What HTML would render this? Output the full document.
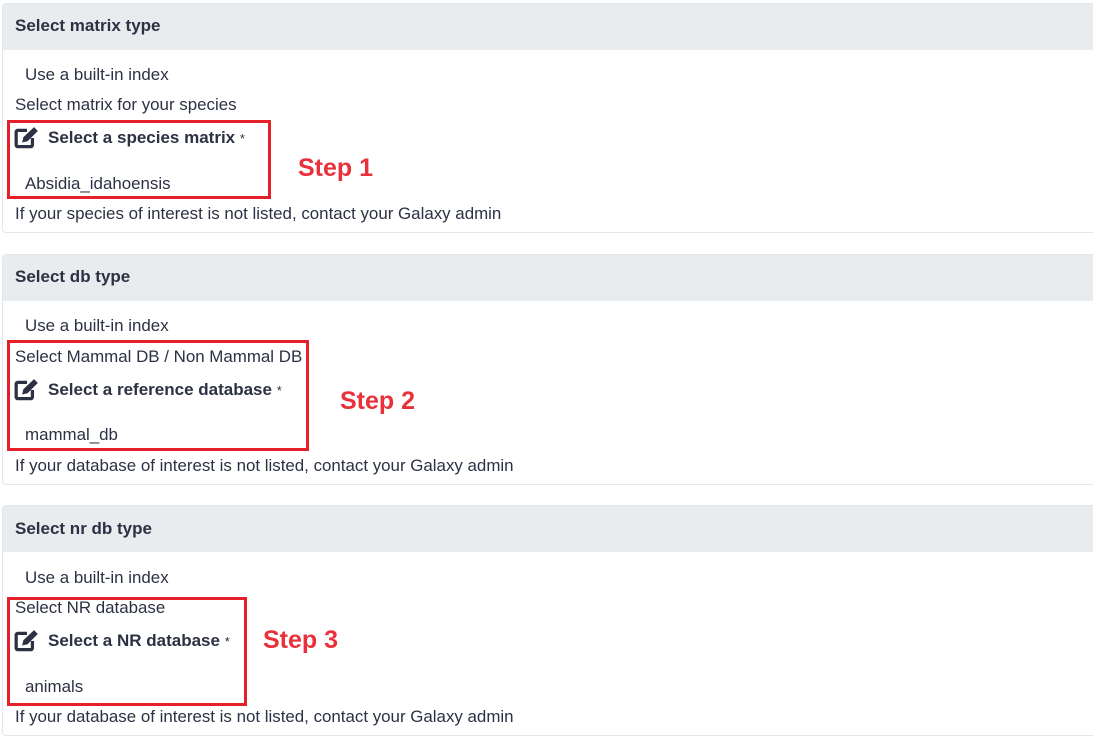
<!DOCTYPE html>
<html><head><meta charset="utf-8"><style>
body{margin:0;width:1093px;height:742px;background:#fff;font-family:"Liberation Sans",sans-serif;color:#2c3143;position:relative;overflow:hidden}
.card{position:absolute;left:2px;width:1093px;border:1px solid #e3e6ea;border-right:none;border-radius:4px 0 0 4px;background:#fff;box-sizing:border-box}
.hd{position:absolute;left:0;right:0;top:0;height:46px;background:#e9ecef}
.t{position:absolute;white-space:nowrap;font-size:16.9px}
.b{font-weight:bold;font-size:17px}
.box{position:absolute;border:3px solid #e5202b;box-sizing:border-box}
.step{position:absolute;color:#e8313b;font-weight:bold;font-size:25px;white-space:nowrap}
svg{position:absolute}
</style></head><body>
<div class="card" style="top:3px;height:230px"><div class="hd"></div></div>
<div class="card" style="top:254px;height:231px"><div class="hd"></div></div>
<div class="card" style="top:505px;height:231px"><div class="hd"></div></div>

<div class="t b" style="left:15px;top:16px">Select matrix type</div>
<div class="t" style="left:25px;top:65px">Use a built-in index</div>
<div class="t" style="left:15px;top:95px">Select matrix for your species</div>
<div class="t b" style="left:48px;top:128px">Select a species matrix <span style="font-weight:normal;font-size:13px">*</span></div>
<div class="t" style="left:25px;top:174px">Absidia_idahoensis</div>
<div class="t" style="left:15px;top:204px">If your species of interest is not listed, contact your Galaxy admin</div>
<div class="box" style="left:7px;top:120px;width:264px;height:79px"></div>
<div class="step" style="left:298px;top:154px">Step 1</div>

<div class="t b" style="left:15px;top:267px">Select db type</div>
<div class="t" style="left:25px;top:316px">Use a built-in index</div>
<div class="t" style="left:15px;top:347px">Select Mammal DB / Non Mammal DB</div>
<div class="t b" style="left:48px;top:380px">Select a reference database <span style="font-weight:normal;font-size:13px">*</span></div>
<div class="t" style="left:25px;top:425px">mammal_db</div>
<div class="t" style="left:15px;top:456px">If your database of interest is not listed, contact your Galaxy admin</div>
<div class="box" style="left:7px;top:340px;width:302px;height:111px"></div>
<div class="step" style="left:340px;top:387px">Step 2</div>

<div class="t b" style="left:15px;top:519px">Select nr db type</div>
<div class="t" style="left:25px;top:568px">Use a built-in index</div>
<div class="t" style="left:15px;top:598px">Select NR database</div>
<div class="t b" style="left:48px;top:631px">Select a NR database <span style="font-weight:normal;font-size:13px">*</span></div>
<div class="t" style="left:25px;top:677px">animals</div>
<div class="t" style="left:15px;top:707px">If your database of interest is not listed, contact your Galaxy admin</div>
<div class="box" style="left:7px;top:597px;width:240px;height:109px"></div>
<div class="step" style="left:263px;top:626px">Step 3</div>

<svg style="left:14px;top:127px" width="26" height="22" viewBox="0 0 24 20"><path d="M12 3H3.5A1.5 1.5 0 0 0 2 4.5v12A1.5 1.5 0 0 0 3.5 18h12a1.5 1.5 0 0 0 1.5-1.5V10" fill="none" stroke="#2c3143" stroke-width="3"/><path d="M18.5 0l3.5 3.5-9.5 9.5-5 1.2 1.2-5z" fill="#2c3143"/></svg>
<svg style="left:14px;top:379px" width="26" height="22" viewBox="0 0 24 20"><path d="M12 3H3.5A1.5 1.5 0 0 0 2 4.5v12A1.5 1.5 0 0 0 3.5 18h12a1.5 1.5 0 0 0 1.5-1.5V10" fill="none" stroke="#2c3143" stroke-width="3"/><path d="M18.5 0l3.5 3.5-9.5 9.5-5 1.2 1.2-5z" fill="#2c3143"/></svg>
<svg style="left:14px;top:630px" width="26" height="22" viewBox="0 0 24 20"><path d="M12 3H3.5A1.5 1.5 0 0 0 2 4.5v12A1.5 1.5 0 0 0 3.5 18h12a1.5 1.5 0 0 0 1.5-1.5V10" fill="none" stroke="#2c3143" stroke-width="3"/><path d="M18.5 0l3.5 3.5-9.5 9.5-5 1.2 1.2-5z" fill="#2c3143"/></svg>
</body></html>
